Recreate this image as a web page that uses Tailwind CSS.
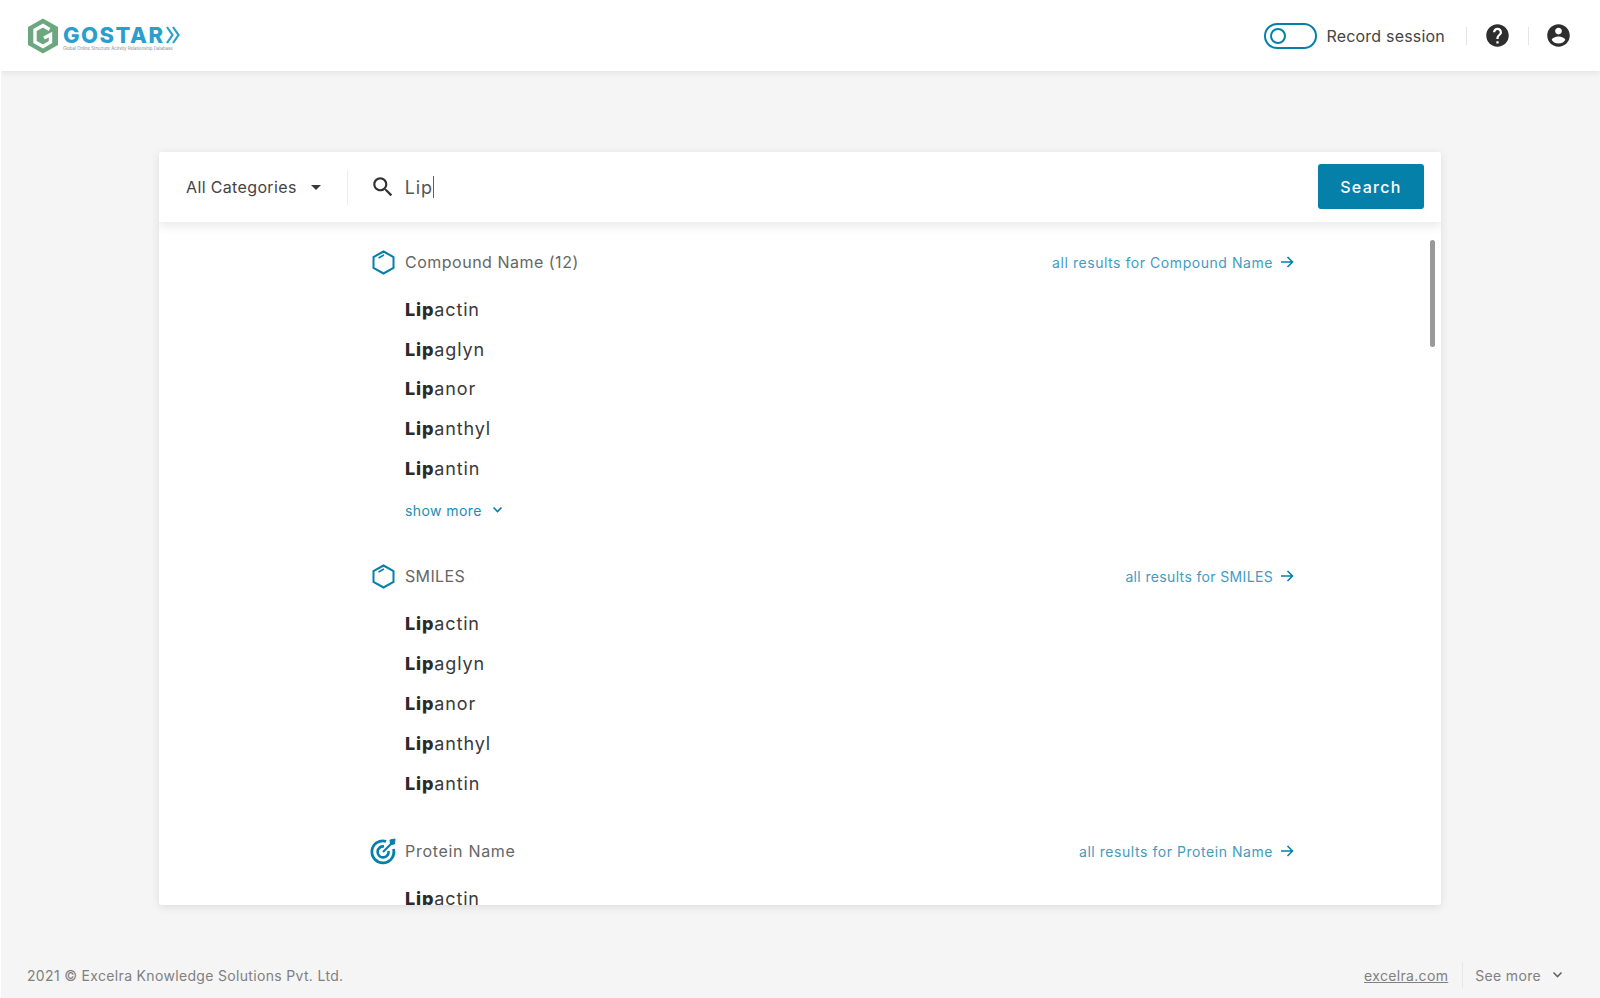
<!DOCTYPE html>
<html lang="en">
<head>
    <meta charset="UTF-8">
    <title>GOSTAR search</title>
    <script src="https://cdn.jsdelivr.net/npm/@tailwindcss/browser@4"></script>
</head>
<body class="bg-[#f5f5f5] h-[998px] overflow-hidden flex flex-col border-l border-white font-['Inter',sans-serif] text-[#3a3a3a]">
    <!-- header -->
    <header class="h-[71px] shrink-0 bg-white shadow-[0_2px_6px_rgba(0,0,0,0.08)] flex items-center pl-[26px] pr-[28px] z-20 relative">
        <svg class="w-[32px] h-[36px] shrink-0" viewBox="0 0 32 36" fill="none">
            <path d="M16 0.500 31 9V27L16 35.500 1 27V9Z" fill="#6da77f"/>
            <path d="M22.500 11.500 16 7.500 8 12V24L16 28.500 23.500 24V16.500L17 20" stroke="#fff" stroke-width="3.400" fill="none"/>
        </svg>
        <div class="ml-[4px] w-[103px] flex flex-col pt-[5px]">
            <span class="text-[22px] leading-[20px] font-extrabold text-[#2a9fcf] tracking-[1.5px]">GOSTAR</span>
            <span class="text-[4.300px] leading-[6px] mt-px text-[#8a8a8a] whitespace-nowrap">Global Online Structure Activity Relationship Database</span>
        </div>
        <svg class="w-[14px] h-[20px] -mt-[2px]" viewBox="0 0 14 20" fill="none" stroke="#2a9fcf" stroke-width="2.200">
            <path d="M1 2 6.500 10 1 18"/>
            <path d="M7 2 12.500 10 7 18"/>
        </svg>
        <div class="ml-auto flex items-center">
            <div class="w-[53px] h-[26px] rounded-full border-[2.500px] border-[#0580a8] flex items-center pl-[4px]">
                <div class="w-[16px] h-[16px] rounded-full border-2 border-[#0580a8]"></div>
            </div>
            <span class="ml-[9px] text-[16px] text-[#444] tracking-[0.2px] whitespace-nowrap">Record session</span>
            <div class="ml-[21px] w-px h-[18px] bg-[#e4e4e4]"></div>
            <svg class="ml-[17px] w-[27px] h-[27px]" viewBox="0 0 24 24" fill="#2e2e2e"><path d="M12 2C6.480 2 2 6.480 2 12s4.480 10 10 10 10-4.480 10-10S17.520 2 12 2zm1 17h-2v-2h2v2zm2.070-7.750l-.9.920C13.450 12.900 13 13.500 13 15h-2v-.5c0-1.100.45-2.100 1.170-2.830l1.240-1.260c.37-.36.59-.86.59-1.410 0-1.100-.9-2-2-2s-2 .9-2 2H8c0-2.210 1.790-4 4-4s4 1.790 4 4c0 .88-.36 1.680-.93 2.250z"/></svg>
            <div class="ml-[17px] w-px h-[18px] bg-[#e4e4e4]"></div>
            <svg class="ml-[16px] w-[27px] h-[27px]" viewBox="0 0 24 24" fill="#2e2e2e"><path d="M12 2C6.480 2 2 6.480 2 12s4.480 10 10 10 10-4.480 10-10S17.520 2 12 2zm0 3c1.660 0 3 1.340 3 3s-1.340 3-3 3-3-1.340-3-3 1.340-3 3-3zm0 14.200c-2.500 0-4.710-1.280-6-3.220.03-1.990 4-3.080 6-3.080 1.990 0 5.970 1.090 6 3.080-1.290 1.940-3.500 3.220-6 3.220z"/></svg>
        </div>
    </header>

    <!-- search card -->
    <main class="mt-[81px] ml-[158px] w-[1282px] h-[753px] shrink-0 bg-white rounded-[3px] shadow-[0_2px_10px_rgba(0,0,0,0.1)] flex flex-col overflow-hidden">
        <div class="h-[70px] shrink-0 flex items-center pl-[27px] pr-[17px] bg-white shadow-[0_4px_10px_rgba(0,0,0,0.09)] z-10">
            <span class="text-[16px] text-[#444] tracking-[0.36px] whitespace-nowrap">All Categories</span>
            <svg class="ml-[7px] w-[24px] h-[24px]" viewBox="0 0 24 24" fill="#3a3a3a"><path d="M7 10l5 5 5-5z"/></svg>
            <div class="ml-[19px] w-px h-[35px] bg-[#ececec]"></div>
            <svg class="ml-[22px] w-[26px] h-[26px]" viewBox="0 0 24 24" fill="#333"><path d="M15.500 14h-.79l-.28-.27C15.410 12.590 16 11.110 16 9.500 16 5.910 13.090 3 9.500 3S3 5.910 3 9.500 5.910 16 9.500 16c1.610 0 3.090-.59 4.230-1.570l.27.28v.79l5 4.990L20.490 19l-4.990-5zm-6 0C7.010 14 5 11.990 5 9.500S7.010 5 9.500 5 14 7.010 14 9.500 11.990 14 9.500 14z"/></svg>
            <span class="ml-[9px] text-[18px] text-[#555] tracking-[0.9px]">Lip</span>
            <div class="w-px h-[22px] bg-[#0580a8]"></div>
            <button class="ml-auto -mt-px w-[106px] h-[45px] rounded-[3px] bg-[#0580a8] text-white text-[16px] font-medium tracking-[1.3px]">Search</button>
        </div>

        <div class="relative flex-1 overflow-hidden pl-[213px] pr-[147px]">
            <div class="absolute right-[6px] top-[18px] w-[5px] h-[107px] rounded-full bg-[#999]"></div>

            <section>
                <div class="mt-[28px] h-[24px] flex items-center">
                    <div class="w-[33px] flex">
                        <svg class="w-[23px] h-[25px]" viewBox="0 0 23 25" fill="none" stroke="#0580a8" stroke-width="2"><path d="M11.500 1.500 21.500 7V18L11.500 23.500 1.500 18V7Z"/><path d="M6.500 8 12 5" stroke-width="1.500"/></svg>
                    </div>
                    <span class="text-[16px] text-[#666] tracking-[0.5px]">Compound Name (12)</span>
                    <a class="ml-auto flex items-center text-[14px] text-[#3f9cc2] tracking-[0.55px]">all results for Compound Name
                        <svg class="ml-[7px] w-[14px] h-[14px]" viewBox="0 0 14 14" fill="none" stroke="#0580a8" stroke-width="1.600"><path d="M1 7H12.500M7.500 2 12.500 7 7.500 12"/></svg>
                    </a>
                </div>
                <ul class="mt-[15.4px] pl-[33px] text-[18px] tracking-[0.85px] text-[#3a3a3a]">
                    <li class="h-[39.8px] flex items-center"><span><b class="font-extrabold text-[#2b2b2b]">Lip</b>actin</span></li>
                    <li class="h-[39.8px] flex items-center"><span><b class="font-extrabold text-[#2b2b2b]">Lip</b>aglyn</span></li>
                    <li class="h-[39.8px] flex items-center"><span><b class="font-extrabold text-[#2b2b2b]">Lip</b>anor</span></li>
                    <li class="h-[39.8px] flex items-center"><span><b class="font-extrabold text-[#2b2b2b]">Lip</b>anthyl</span></li>
                    <li class="h-[39.8px] flex items-center"><span><b class="font-extrabold text-[#2b2b2b]">Lip</b>antin</span></li>
                </ul>
                <a class="mt-[9.7px] ml-[33px] h-[24px] flex items-center text-[14px] text-[#1a8db5] tracking-[0.42px]">show more
                    <svg class="ml-[10px] w-[11px] h-[8px]" viewBox="0 0 11 8" fill="none" stroke="#0580a8" stroke-width="1.600"><path d="M1.500 1.500 5.500 5.500 9.500 1.500"/></svg>
                </a>
            </section>

            <section class="mt-[42px]">
                <div class="h-[24px] flex items-center">
                    <div class="w-[33px] flex">
                        <svg class="w-[23px] h-[25px]" viewBox="0 0 23 25" fill="none" stroke="#0580a8" stroke-width="2"><path d="M11.500 1.500 21.500 7V18L11.500 23.500 1.500 18V7Z"/><path d="M6.500 8 12 5" stroke-width="1.500"/></svg>
                    </div>
                    <span class="text-[16px] text-[#666] tracking-[0.35px]">SMILES</span>
                    <a class="ml-auto flex items-center text-[14px] text-[#3f9cc2] tracking-[0.35px]">all results for SMILES
                        <svg class="ml-[7px] w-[14px] h-[14px]" viewBox="0 0 14 14" fill="none" stroke="#0580a8" stroke-width="1.600"><path d="M1 7H12.500M7.500 2 12.500 7 7.500 12"/></svg>
                    </a>
                </div>
                <ul class="mt-[15px] pl-[33px] text-[18px] tracking-[0.85px] text-[#3a3a3a]">
                    <li class="h-[40px] flex items-center"><span><b class="font-extrabold text-[#2b2b2b]">Lip</b>actin</span></li>
                    <li class="h-[40px] flex items-center"><span><b class="font-extrabold text-[#2b2b2b]">Lip</b>aglyn</span></li>
                    <li class="h-[40px] flex items-center"><span><b class="font-extrabold text-[#2b2b2b]">Lip</b>anor</span></li>
                    <li class="h-[40px] flex items-center"><span><b class="font-extrabold text-[#2b2b2b]">Lip</b>anthyl</span></li>
                    <li class="h-[40px] flex items-center"><span><b class="font-extrabold text-[#2b2b2b]">Lip</b>antin</span></li>
                </ul>
            </section>

            <section class="mt-[36px]">
                <div class="h-[24px] flex items-center">
                    <div class="w-[33px] flex">
                        <svg class="w-[28px] h-[28px] -ml-[3px]" viewBox="0 0 28 28" fill="none" stroke="#0580a8">
                            <path d="M17 4.300A11 11 0 1 0 24.500 12" stroke-width="2.800"/>
                            <path d="M15 9.500A5.500 5.500 0 1 0 19.500 14" stroke-width="2.600"/>
                            <path d="M14 15 23 6" stroke-width="2.200"/>
                            <path d="M21 3 26 2 25.500 7 21.500 7.500Z" fill="#0580a8" stroke-width="1"/>
                        </svg>
                    </div>
                    <span class="text-[16px] text-[#666] tracking-[0.7px]">Protein Name</span>
                    <a class="ml-auto flex items-center text-[14px] text-[#3f9cc2] tracking-[0.55px]">all results for Protein Name
                        <svg class="ml-[7px] w-[14px] h-[14px]" viewBox="0 0 14 14" fill="none" stroke="#0580a8" stroke-width="1.600"><path d="M1 7H12.500M7.500 2 12.500 7 7.500 12"/></svg>
                    </a>
                </div>
                <ul class="mt-[15px] pl-[33px] text-[18px] tracking-[0.85px] text-[#3a3a3a]">
                    <li class="h-[40px] flex items-center"><span><b class="font-extrabold text-[#2b2b2b]">Lip</b>actin</span></li>
                </ul>
            </section>
        </div>
    </main>

    <!-- footer -->
    <footer class="mt-auto mb-px h-[44px] shrink-0 flex items-center pl-[26px] pr-[37px] text-[14px] text-[#808080] tracking-[0.33px]">
        <span>2021 © Excelra Knowledge Solutions Pvt. Ltd.</span>
        <a class="ml-auto underline">excelra.com</a>
        <div class="ml-[14px] w-px h-[26px] bg-[#e6e6e6]"></div>
        <span class="ml-[12px]">See more</span>
        <svg class="ml-[11px] w-[11px] h-[8px]" viewBox="0 0 11 8" fill="none" stroke="#666" stroke-width="1.600"><path d="M1.500 1.500 5.500 5.500 9.500 1.500"/></svg>
    </footer>
</body>
</html>
